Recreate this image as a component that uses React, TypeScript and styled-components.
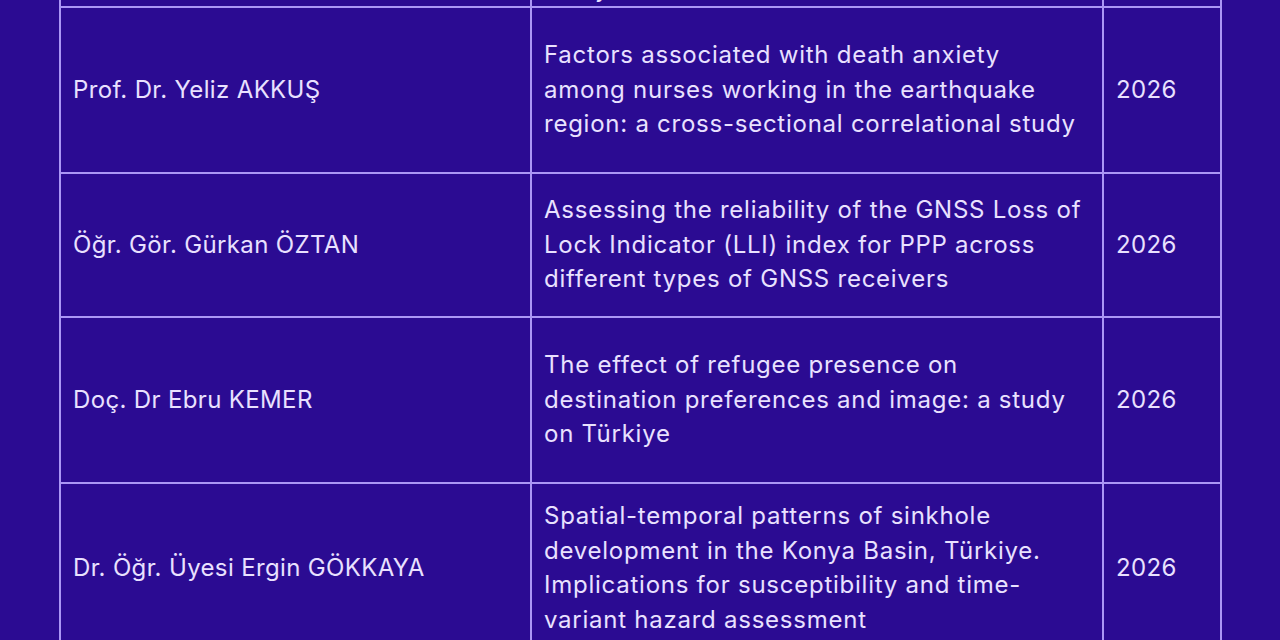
import styled, { createGlobalStyle } from 'styled-components';

const GlobalStyle = createGlobalStyle`
  html, body {
    margin: 0;
    padding: 0;
    background: #2b0b92;
  }
  body {
    font-family: Inter, Roboto, "Liberation Sans", sans-serif;
  }
`;

interface Publication {
  author: string;
  title: string[];
  year: string;
  height: number;
}

const ROWS: Publication[] = [
  {
    author: 'Prof. Dr. Yeliz AKKUŞ',
    title: [
      'Factors associated with death anxiety',
      'among nurses working in the earthquake',
      'region: a cross-sectional correlational study',
    ],
    year: '2026',
    height: 166,
  },
  {
    author: 'Öğr. Gör. Gürkan ÖZTAN',
    title: [
      'Assessing the reliability of the GNSS Loss of',
      'Lock Indicator (LLI) index for PPP across',
      'different types of GNSS receivers',
    ],
    year: '2026',
    height: 144,
  },
  {
    author: 'Doç. Dr Ebru KEMER',
    title: [
      'The effect of refugee presence on',
      'destination preferences and image: a study',
      'on Türkiye',
    ],
    year: '2026',
    height: 166,
  },
  {
    author: 'Dr. Öğr. Üyesi Ergin GÖKKAYA',
    title: [
      'Spatial-temporal patterns of sinkhole',
      'development in the Konya Basin, Türkiye.',
      'Implications for susceptibility and time-',
      'variant hazard assessment',
    ],
    year: '2026',
    height: 170,
  },
];

export default function App() {
  return (
    <>
      <GlobalStyle />
      <S.Page>
        <S.Table>
          <colgroup>
            <col style={{ width: 471 }} />
            <col style={{ width: 572 }} />
            <col style={{ width: 118 }} />
          </colgroup>
          <tbody>
            <S.Row $height={60}>
              <S.Cell $valign="bottom" />
              <S.Cell $valign="bottom">
                <S.Line>study</S.Line>
              </S.Cell>
              <S.Cell $valign="bottom" />
            </S.Row>
            {ROWS.map((row) => (
              <S.Row key={row.author} $height={row.height}>
                <S.Cell>{row.author}</S.Cell>
                <S.Cell $wide>
                  {row.title.map((line) => (
                    <S.Line key={line}>{line}</S.Line>
                  ))}
                </S.Cell>
                <S.Cell>{row.year}</S.Cell>
              </S.Row>
            ))}
          </tbody>
        </S.Table>
      </S.Page>
    </>
  );
}

const S = {
  Page: styled.div`
    width: 1280px;
    height: 640px;
    overflow: hidden;
    background: #2b0b92;
    padding-left: 59px;
    box-sizing: border-box;
  `,
  Table: styled.table`
    margin-top: -54px;
    width: 1162px;
    table-layout: fixed;
    border-collapse: collapse;
    color: #e9e1ff;
    font-size: 24px;
    line-height: 34.5px;
    letter-spacing: 0.35px;
  `,
  Row: styled.tr<{ $height: number }>`
    height: ${(props) => props.$height}px;
  `,
  Cell: styled.td<{ $valign?: 'middle' | 'bottom'; $wide?: boolean }>`
    border: 2px solid #ab97f6;
    padding: 0 12px;
    vertical-align: ${(props) => props.$valign ?? 'middle'};
    letter-spacing: ${(props) => (props.$wide ? '0.75px' : 'inherit')};
    white-space: nowrap;
    overflow: hidden;
  `,
  Line: styled.span`
    display: block;
  `,
};
